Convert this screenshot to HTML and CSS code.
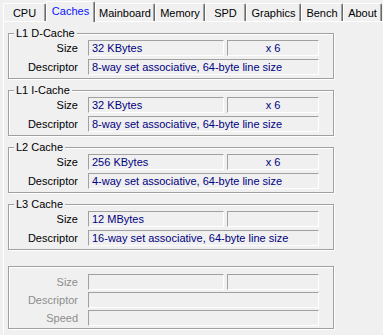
FILE: index.html
```
<!DOCTYPE html>
<html lang="en">
<head>
    <meta charset="UTF-8">
    <title>Caches</title>
    <link rel="stylesheet" href="styles.css">
</head>
<body>
<div class="tabs">
    <div class="tab w-cpu">CPU</div>
    <div class="tab active w-caches">Caches</div>
    <div class="tab w-mainboard">Mainboard</div>
    <div class="tab w-memory">Memory</div>
    <div class="tab w-spd">SPD</div>
    <div class="tab w-graphics">Graphics</div>
    <div class="tab w-bench">Bench</div>
    <div class="tab w-about">About</div>
</div>
<div class="page">
    <fieldset class="group">
        <legend>L1 D-Cache</legend>
        <div class="rows">
            <span class="label">Size</span>
            <span class="field">32 KBytes</span>
            <span class="field center">x 6</span>
            <span class="label">Descriptor</span>
            <span class="field wide">8-way set associative, 64-byte line size</span>
        </div>
    </fieldset>
    <fieldset class="group">
        <legend>L1 I-Cache</legend>
        <div class="rows">
            <span class="label">Size</span>
            <span class="field">32 KBytes</span>
            <span class="field center">x 6</span>
            <span class="label">Descriptor</span>
            <span class="field wide">8-way set associative, 64-byte line size</span>
        </div>
    </fieldset>
    <fieldset class="group">
        <legend>L2 Cache</legend>
        <div class="rows">
            <span class="label">Size</span>
            <span class="field">256 KBytes</span>
            <span class="field center">x 6</span>
            <span class="label">Descriptor</span>
            <span class="field wide">4-way set associative, 64-byte line size</span>
        </div>
    </fieldset>
    <fieldset class="group">
        <legend>L3 Cache</legend>
        <div class="rows">
            <span class="label">Size</span>
            <span class="field">12 MBytes</span>
            <span class="field center"></span>
            <span class="label">Descriptor</span>
            <span class="field wide">16-way set associative, 64-byte line size</span>
        </div>
    </fieldset>
    <fieldset class="group empty">
        <div class="rows">
            <span class="label">Size</span>
            <span class="field"></span>
            <span class="field"></span>
            <span class="label">Descriptor</span>
            <span class="field wide"></span>
            <span class="label">Speed</span>
            <span class="field wide"></span>
        </div>
    </fieldset>
</div>
</body>
</html>
```
FILE: styles.css
```
*{
    box-sizing: border-box;
}
body{
    margin: 0;
    background-color: #f0f0f0;
    font-family: "Liberation Sans", Arial, sans-serif;
    font-size: 11px;
    color: #000;
    overflow: hidden;
}
.tabs{
    display: flex;
    align-items: flex-end;
    height: 21px;
    padding-left: 3px;
    position: relative;
    z-index: 1;
}
.tab{
    display: flex;
    justify-content: center;
    align-items: center;
    height: 18px;
    padding-top: 1px;
    border-top: 1px solid #fff;
    border-left: 1px solid #fff;
    border-right: 1px solid #696969;
    box-shadow: inset -1px 0 0 #a0a0a0;
    border-radius: 2px 2px 0 0;
}
.tab.active{
    height: 21px;
    margin-bottom: -1px;
    padding-top: 0;
    padding-bottom: 2px;
    color: #0a14ff;
    background-color: #f0f0f0;
}
.w-cpu{ width: 43px; }
.w-caches{ width: 49px; }
.w-mainboard{ width: 60px; }
.w-memory{ width: 50px; }
.w-spd{ width: 41px; }
.w-graphics{ width: 55px; }
.w-bench{ width: 42px; }
.w-about{ width: 39px; }

.page{
    margin-left: 3px;
    height: 314px;
    border-top: 1px solid #fff;
    border-left: 1px solid #fff;
    padding: 5px 0 0 4px;
}
.group{
    width: 326px;
    margin: 0 0 5px 0;
    padding: 0 0 3px 0;
    border: 1px solid #a0a0a0;
    box-shadow: 1px 1px 0 #fff, inset 1px 1px 0 #fff;
    min-width: 0;
}
.group legend{
    margin-left: 5px;
    padding: 0 2px;
    line-height: 13px;
    background-color: #f0f0f0;
}
.group.empty{
    margin-top: 16px;
    padding-top: 7px;
    padding-bottom: 2px;
}
.rows{
    display: grid;
    grid-template-columns: 79px 136px 95px;
    grid-auto-rows: 16px;
    row-gap: 3px;
}
.empty .rows{
    row-gap: 2px;
}
.label{
    text-align: right;
    padding-right: 10px;
    line-height: 16px;
}
.empty .label{
    color: #8d8d8d;
}
.field{
    height: 16px;
    border-top: 1px solid #a0a0a0;
    border-left: 1px solid #a0a0a0;
    border-bottom: 1px solid #fff;
    border-right: 1px solid #fff;
    padding-left: 3px;
    line-height: 14px;
    color: #000080;
    white-space: nowrap;
    overflow: hidden;
}
.field.center{
    margin-left: 3px;
    text-align: center;
    padding-left: 0;
}
.empty .field + .field{
    margin-left: 3px;
}
.field.wide{
    grid-column: 2 / 4;
    margin-left: 0;
}
```
